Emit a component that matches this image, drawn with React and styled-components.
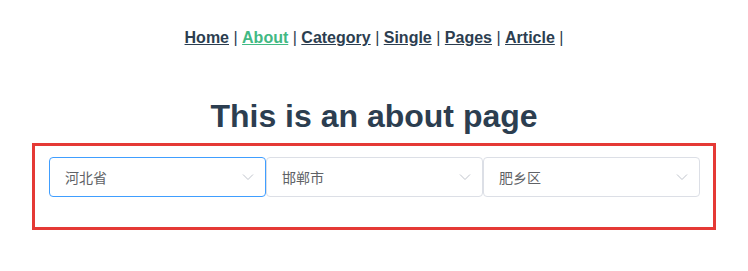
import React from "react";
import styled, { createGlobalStyle } from "styled-components";

const Global = createGlobalStyle`
  body {
    margin: 8px;
    background: #fff;
  }
`;

const AppRoot = styled.div`
  font-family: "Liberation Sans", Arial, Helvetica, sans-serif;
  -webkit-font-smoothing: antialiased;
  text-align: center;
  color: #2c3e50;
`;

const Nav = styled.nav`
  padding: 21px 30px 30px;
  font-size: 16px;
  color: #2c3e50;
`;

const NavLink = styled.a`
  font-weight: bold;
  color: ${(p) => (p.$active ? "#42b983" : "#2c3e50")};
  text-decoration: underline;
  cursor: pointer;
`;

const Title = styled.h1`
  font-size: 32px;
  font-weight: bold;
  margin: 21px 0 8px;
`;

const Frame = styled.div`
  margin: 0 24px;
  border: 3px solid #e53935;
  padding: 11px 13px 30px 14px;
  display: flex;
`;

const Select = styled.div`
  flex: 1;
  box-sizing: border-box;
  height: 40px;
  border: 1px solid ${(p) => (p.$focus ? "#409eff" : "#dcdfe6")};
  border-radius: 4px;
  display: flex;
  align-items: center;
  padding: 0 0 0 15px;
  font-family: "Liberation Sans", "Noto Sans CJK SC", sans-serif;
  font-size: 14px;
  color: #606266;
  text-align: left;
  background: #fff;
`;

const Value = styled.span`
  flex: 1;
`;

const Arrow = styled.span`
  width: 25px;
  margin-right: 5px;
  display: flex;
  align-items: center;
  justify-content: center;
`;

const Chevron = () => (
  <svg width="12" height="8" viewBox="0 0 12 8">
    <path d="M1 1.5 L6 6.5 L11 1.5" fill="none" stroke="#c0c4cc" strokeWidth="1" />
  </svg>
);

const links = ["Home", "About", "Category", "Single", "Pages", "Article"];
const selects = ["河北省", "邯郸市", "肥乡区"];

export default function App() {
  return (
    <AppRoot>
      <Global />
      <Nav>
        {links.map((l) => (
          <React.Fragment key={l}>
            <NavLink $active={l === "About"}>{l}</NavLink> |{" "}
          </React.Fragment>
        ))}
      </Nav>
      <Title>This is an about page</Title>
      <Frame>
        {selects.map((s, i) => (
          <Select key={s} $focus={i === 0}>
            <Value>{s}</Value>
            <Arrow>
              <Chevron />
            </Arrow>
          </Select>
        ))}
      </Frame>
    </AppRoot>
  );
}
